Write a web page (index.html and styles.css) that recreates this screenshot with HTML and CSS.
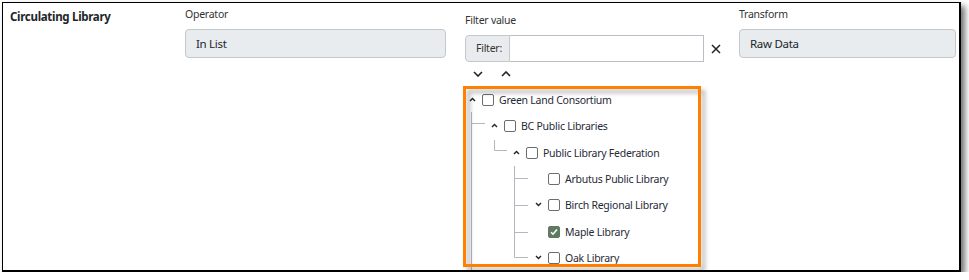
FILE: index.html
```html
<!DOCTYPE html>
<html lang="en">
<head>
  <meta charset="UTF-8">
  <meta name="viewport" content="width=device-width, initial-scale=1.0">
  <title>Circulating Library Filter</title>
  <link rel="stylesheet" href="styles.css">
</head>
<body>

  <div class="frame">
    <div class="field-row">
      <div class="field-name">Circulating Library</div>

      <!-- Operator -->
      <div class="col col-operator">
        <div class="col-label">Operator</div>
        <div class="readonly-box">In List</div>
      </div>

      <!-- Filter value -->
      <div class="col col-filter">
        <div class="col-label">Filter value</div>
        <div class="filter-line">
          <div class="input-group">
            <span class="input-addon">Filter:</span>
            <input class="filter-input" type="text">
          </div>
          <span class="clear-btn">
            <svg width="10" height="10" viewBox="0 0 10 10"><path d="M1 1l8 8M9 1l-8 8" stroke="#222" stroke-width="1.5" fill="none"/></svg>
          </span>
        </div>
        <div class="expand-controls">
          <span class="expand-all">
            <svg width="10" height="6" viewBox="0 0 10 6"><path d="M1 1l4 4 4-4" stroke="#222" stroke-width="1.6" fill="none"/></svg>
          </span>
          <span class="collapse-all">
            <svg width="10" height="6" viewBox="0 0 10 6"><path d="M1 5l4-4 4 4" stroke="#222" stroke-width="1.6" fill="none"/></svg>
          </span>
        </div>

        <div class="tree">
          <!-- connector lines -->
          <svg class="tree-lines" width="70" height="200" viewBox="0 0 70 200">
            <g stroke="#b3b8bd" stroke-width="1" fill="none">
              <path d="M5.5 25V200M5.5 36.5H19"/>
              <path d="M28.5 53V63.5H41"/>
              <path d="M48.5 79V170.5H62M48.5 91.5H62M48.5 118.5H62M48.5 145.5H62"/>
            </g>
          </svg>

          <div class="tree-row level-0">
            <span class="toggle"><svg width="7" height="5" viewBox="0 0 7 5"><path d="M1 4l2.5-2.5L6 4" stroke="#222" stroke-width="1.4" fill="none"/></svg></span>
            <span class="check"></span>
            <span class="node-label">Green Land Consortium</span>
          </div>
          <div class="tree-row level-1">
            <span class="toggle"><svg width="7" height="5" viewBox="0 0 7 5"><path d="M1 4l2.5-2.5L6 4" stroke="#222" stroke-width="1.4" fill="none"/></svg></span>
            <span class="check"></span>
            <span class="node-label">BC Public Libraries</span>
          </div>
          <div class="tree-row level-2">
            <span class="toggle"><svg width="7" height="5" viewBox="0 0 7 5"><path d="M1 4l2.5-2.5L6 4" stroke="#222" stroke-width="1.4" fill="none"/></svg></span>
            <span class="check"></span>
            <span class="node-label">Public Library Federation</span>
          </div>
          <div class="tree-row level-3">
            <span class="toggle"></span>
            <span class="check"></span>
            <span class="node-label">Arbutus Public Library</span>
          </div>
          <div class="tree-row level-3">
            <span class="toggle"><svg width="7" height="5" viewBox="0 0 7 5"><path d="M1 1l2.5 2.5L6 1" stroke="#222" stroke-width="1.4" fill="none"/></svg></span>
            <span class="check"></span>
            <span class="node-label">Birch Regional Library</span>
          </div>
          <div class="tree-row level-3">
            <span class="toggle"></span>
            <span class="check checked">
              <svg width="10" height="10" viewBox="0 0 10 10"><path d="M2 5.2l2 2 4-4.6" stroke="#fff" stroke-width="1.6" fill="none"/></svg>
            </span>
            <span class="node-label">Maple Library</span>
          </div>
          <div class="tree-row level-3">
            <span class="toggle"><svg width="7" height="5" viewBox="0 0 7 5"><path d="M1 1l2.5 2.5L6 1" stroke="#222" stroke-width="1.4" fill="none"/></svg></span>
            <span class="check"></span>
            <span class="node-label">Oak Library</span>
          </div>
        </div>
      </div>

      <!-- Transform -->
      <div class="col col-transform">
        <div class="col-label">Transform</div>
        <div class="readonly-box">Raw Data</div>
      </div>
    </div>

    <!-- orange callout round the tree -->
    <div class="highlight"></div>
  </div>

</body>
</html>
```

FILE: styles.css
```css
body {
  margin: 0;
  background-color: #fff;
  font-family: 'Noto Sans', sans-serif;
  color: #212529;
}

.frame {
  position: relative;
  box-sizing: border-box;
  width: 959px;
  height: 270px;
  margin: 2px 0 0 2px;
  border: 1px solid #000;
  border-right-width: 2px;
  border-bottom-width: 2px;
  overflow: hidden;
  background-color: #fff;
  box-shadow: 4px 4px 6px rgba(0, 0, 0, 0.55);
}

.field-row {
  display: flex;
  padding-left: 7px;
}

.field-name {
  width: 175px;
  padding-top: 6px;
  font-size: 11.5px;
  font-weight: bold;
  line-height: 16px;
  letter-spacing: -0.3px;
  color: #212529;
}

.col-label {
  font-size: 10.5px;
  line-height: 16px;
  letter-spacing: -0.25px;
  color: #333;
  margin-bottom: 7px;
}

.col-operator {
  width: 261px;
  padding-top: 3px;
}

.col-filter {
  width: 260px;
  margin-left: 19px;
  padding-top: 9px;
}

.col-transform {
  width: 217px;
  margin-left: 14px;
  padding-top: 3px;
}

.readonly-box {
  box-sizing: border-box;
  height: 28.5px;
  padding-left: 10px;
  background-color: #e9ecef;
  border: 1px solid #c3c8cd;
  border-radius: 4px;
  font-size: 11.5px;
  letter-spacing: -0.3px;
  line-height: 27px;
  color: #212529;
}

/* Filter input */
.filter-line {
  display: flex;
  align-items: center;
}

.input-group {
  display: flex;
  width: 239px;
  height: 27px;
}

.input-addon {
  box-sizing: border-box;
  width: 45px;
  padding-left: 10px;
  background-color: #e9ecef;
  border: 1px solid #c3c8cd;
  border-radius: 4px 0 0 4px;
  font-size: 10.5px;
  letter-spacing: -0.25px;
  line-height: 25px;
  color: #333;
}

.filter-input {
  flex: 1;
  min-width: 0;
  margin: 0;
  padding: 0;
  border: 1px solid #b8bec4;
  border-left: none;
  border-radius: 0;
  background-color: #fff;
}

.clear-btn {
  display: flex;
  margin-left: 7px;
  margin-top: 1px;
}

.expand-controls {
  display: flex;
  align-items: center;
  height: 11px;
  margin-top: 6px;
}

.expand-controls span {
  display: flex;
}

.expand-all {
  margin-left: 8px;
}

.collapse-all {
  margin-left: 18px;
}

/* Tree */
.tree {
  position: relative;
  margin-top: 8px;
  margin-left: 1px;
}

.tree-lines {
  position: absolute;
  left: 0;
  top: 0;
}

.tree-row {
  position: relative;
  display: flex;
  align-items: center;
  height: 26.3px;
}

.level-1 { padding-left: 22px; }
.level-2 { padding-left: 44px; }
.level-3 { padding-left: 66px; }

.toggle {
  display: flex;
  justify-content: center;
  width: 12px;
  margin-top: -1px;
}

.check {
  box-sizing: border-box;
  display: flex;
  align-items: center;
  justify-content: center;
  width: 12px;
  height: 12px;
  margin-left: 4px;
  border: 1px solid #6a6e72;
  border-radius: 2px;
  background-color: #fff;
}

.check.checked {
  background-color: #5f7a60;
  border-color: #5f7a60;
}

.node-label {
  margin-left: 5px;
  font-size: 10.5px;
  letter-spacing: -0.25px;
  color: #1f2a36;
}

/* Callout */
.highlight {
  position: absolute;
  left: 460px;
  top: 83px;
  box-sizing: border-box;
  width: 238px;
  height: 181px;
  border: 3px solid #ff8000;
  filter: drop-shadow(4px 4px 2px rgba(0, 0, 0, 0.3));
}
```
